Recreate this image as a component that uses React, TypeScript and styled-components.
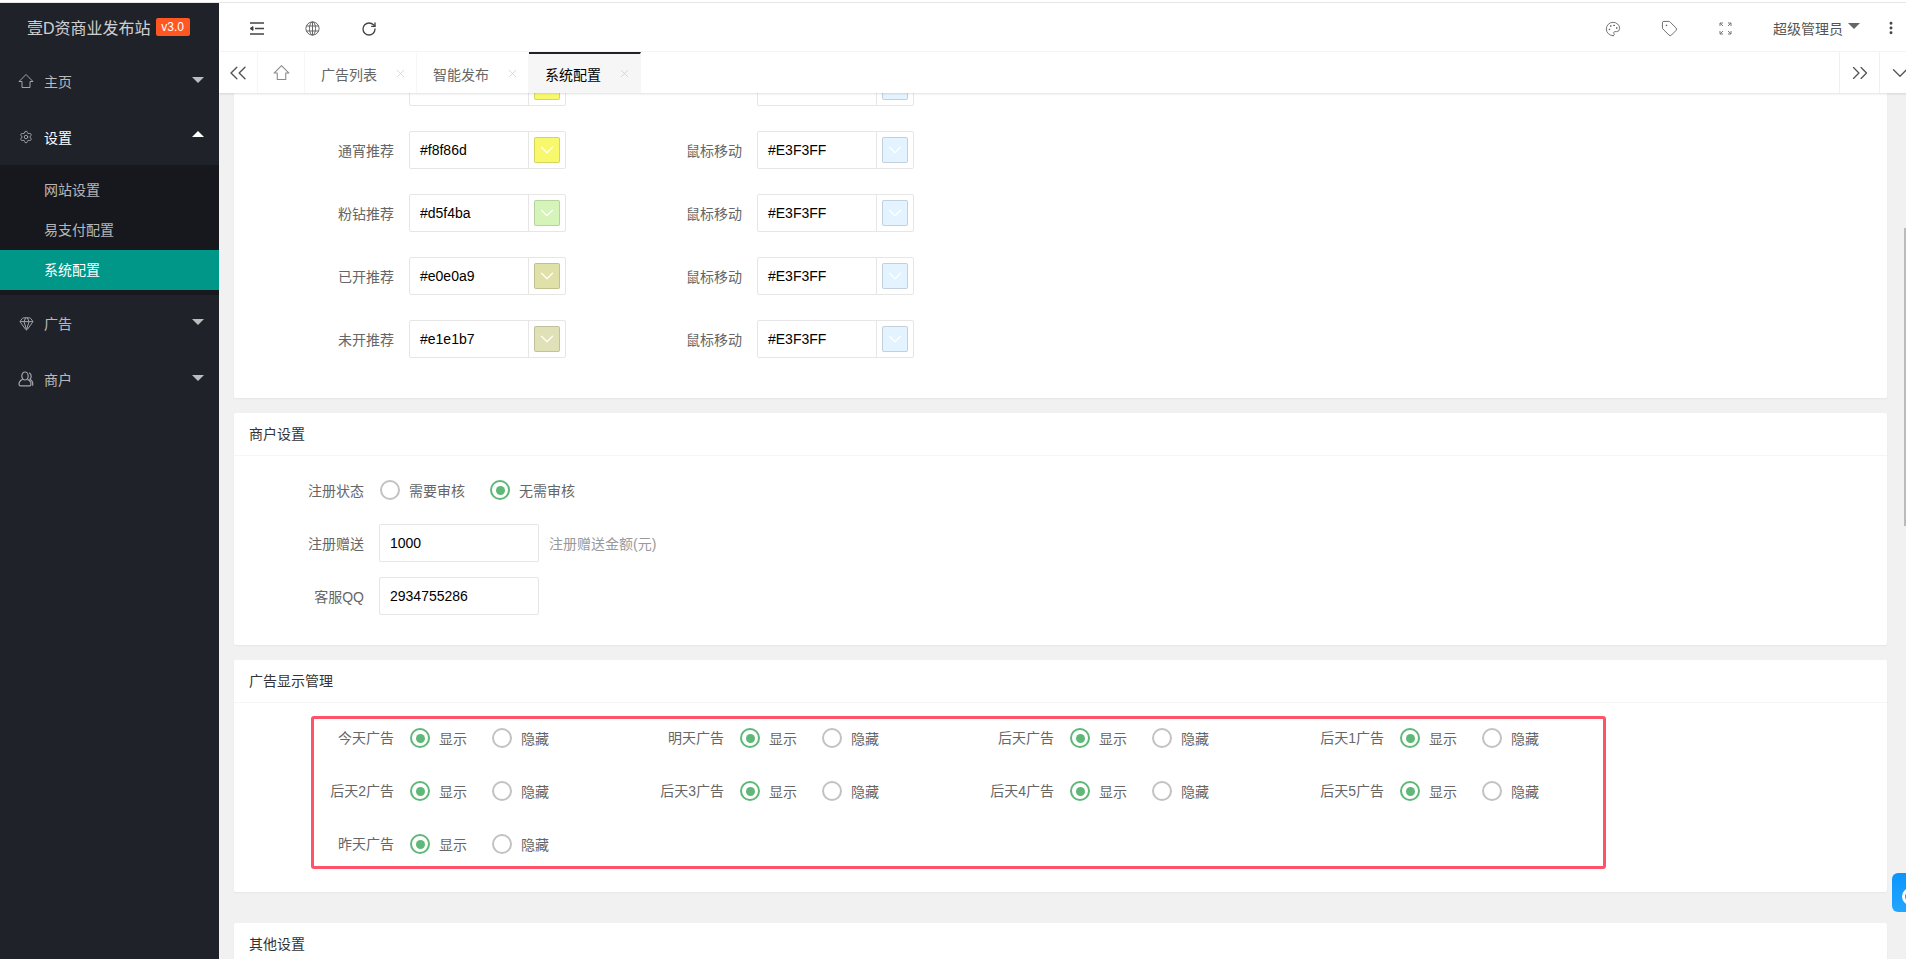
import React from 'react';
import styled, { createGlobalStyle } from 'styled-components';
import {
  ChevronDown,
  ChevronsLeft,
  ChevronsRight,
  EllipsisVertical,
  Gem,
  Palette,
  RotateCw,
  Settings,
  Tag,
  X,
} from 'lucide-react';

const GlobalStyle = createGlobalStyle`
  html, body, #root {
    height: 100%;
    margin: 0;
  }
  body {
    overflow: hidden;
    background: #fff;
    font-family: "Liberation Sans", "Noto Sans CJK SC", sans-serif;
    font-size: 14px;
    color: #666;
  }
  * {
    box-sizing: border-box;
  }
`;

const Page = styled.div`
  display: flex;
  flex-direction: column;
  height: 100%;
`;

const TopStrip = styled.div`
  flex: none;
  height: 3px;
  border-bottom: 1px solid #e6e6e6;
`;

const Shell = styled.div`
  flex: 1;
  display: flex;
  min-height: 0;
`;

/* sidebar */
const Sidebar = styled.aside`
  flex: none;
  width: 219px;
  background: #20222a;
  color: rgba(255, 255, 255, 0.7);
`;

const Logo = styled.div`
  display: flex;
  align-items: center;
  gap: 5px;
  height: 50px;
  padding: 0 0 2px 27px;
  font-size: 16px;
  color: rgba(255, 255, 255, 0.8);
`;

const Badge = styled.span`
  width: 34px;
  height: 18px;
  border-radius: 2px;
  background: #ff5722;
  color: #fff;
  font-size: 12px;
  line-height: 18px;
  text-align: center;
`;

const NavItem = styled.div<{ $open?: boolean }>`
  display: flex;
  align-items: center;
  height: 56px;
  padding: 0 15px 1px 44px;
  position: relative;
  color: ${({ $open }) => ($open ? '#fff' : 'rgba(255, 255, 255, 0.7)')};
`;

const NavIcon = styled.span`
  position: absolute;
  left: 18px;
  top: 50%;
  width: 16px;
  height: 16px;
  margin-top: -8px;
  display: flex;
  align-items: center;
  justify-content: center;
  color: #a3a5a9;
`;

const Caret = styled.i<{ $up?: boolean }>`
  margin-left: auto;
  margin-top: ${({ $up }) => ($up ? '-5px' : '0')};
  width: 0;
  height: 0;
  border: 6px solid transparent;
  ${({ $up }) =>
    $up
      ? 'border-bottom-color: #fff; border-top-width: 0;'
      : 'border-top-color: rgba(255, 255, 255, 0.7); border-bottom-width: 0; transform: translateY(-1px);'}
`;

const SubNav = styled.div`
  padding: 5px 0;
  background: #17181d;
`;

const SubItem = styled.div<{ $active?: boolean }>`
  height: 40px;
  line-height: 40px;
  padding-left: 44px;
  background: ${({ $active }) => ($active ? '#009688' : 'transparent')};
  color: ${({ $active }) => ($active ? '#fff' : 'rgba(255, 255, 255, 0.7)')};
`;

/* header */
const Main = styled.main`
  flex: 1;
  min-width: 0;
  display: flex;
  flex-direction: column;
  overflow: hidden;
  position: relative;
`;

const Header = styled.header`
  flex: none;
  display: flex;
  align-items: center;
  height: 49px;
  padding: 2px 0 0 30px;
  border-bottom: 1px solid #f6f6f6;
`;

const HeaderTool = styled.span`
  width: 56px;
  padding-top: 1px;
  display: flex;
  align-items: center;
  color: #444;
`;

const HeaderRight = styled.div`
  margin-left: auto;
  display: flex;
  align-items: center;
`;

const RightTool = styled.span`
  width: 56px;
  padding-top: 1px;
  display: flex;
  justify-content: center;
  color: #555;
`;

const UserName = styled.span`
  margin-left: 20px;
  color: #555;
`;

const UserCaret = styled.i`
  margin-left: 5px;
  width: 0;
  height: 0;
  border: 6px solid transparent;
  border-top-color: #666;
  border-bottom-width: 0;
  transform: translateY(-2px);
`;

const MoreTool = styled.span`
  display: flex;
  margin: 0 7px 0 23px;
  color: #444;
`;

/* tabs */
const TabBar = styled.nav`
  flex: none;
  display: flex;
  height: 41px;
  margin-right: -13px;
  background: #fff;
  box-shadow: 0 1px 2px rgba(0, 0, 0, 0.12);
  position: relative;
  z-index: 1;
`;

const TabButton = styled.span<{ $end?: boolean }>`
  flex: none;
  display: flex;
  align-items: center;
  justify-content: center;
  width: ${({ $end }) => ($end ? '40px' : '39px')};
  color: #555;
  ${({ $end }) =>
    $end ? 'border-left: 1px solid #f0f0f0;' : 'border-right: 1px solid #f6f6f6;'}
`;

const HomeTab = styled.span`
  flex: none;
  display: flex;
  align-items: center;
  justify-content: center;
  width: 47px;
  color: #8a8a8a;
  border-right: 1px solid #f6f6f6;
`;

const Tab = styled.span<{ $active?: boolean }>`
  flex: none;
  display: flex;
  align-items: center;
  justify-content: space-between;
  width: 112px;
  padding: 0 9px 0 16px;
  color: ${({ $active }) => ($active ? '#000' : '#666')};
  background: ${({ $active }) => ($active ? '#f6f6f6' : 'transparent')};
  border-top: 2px solid ${({ $active }) => ($active ? '#20222a' : 'transparent')};
  border-right: 1px solid ${({ $active }) => ($active ? 'transparent' : '#f6f6f6')};
  svg {
    color: #c8c8c8;
  }
`;

const TabSpacer = styled.span`
  flex: 1;
`;

/* page body */
const Body = styled.div`
  flex: 1;
  min-height: 0;
  overflow: hidden;
  padding: 0 19px 0 15px;
  background: #f1f1f1;
`;

const Card = styled.section`
  display: flow-root;
  background: #fff;
  border-radius: 2px;
  box-shadow: 0 1px 2px rgba(0, 0, 0, 0.05);
  margin-bottom: 15px;
`;

/* the page is scrolled: the first row sits partly behind the tab bar */
const ScrolledCard = styled(Card)`
  margin-top: -25px;
  padding-bottom: 40px;
`;

const SpacedCard = styled(Card)`
  margin-bottom: 31px;
`;

const CardTitle = styled.h2`
  margin: 0;
  height: 43px;
  padding-left: 15px;
  border-bottom: 1px solid #f6f6f6;
  color: #333;
  font-size: 14px;
  font-weight: 400;
  line-height: 42px;
`;

const ColorGrid = styled.div`
  display: grid;
  grid-template-columns: 332px 348px;
  grid-auto-rows: 38px;
  row-gap: 25px;
`;

const ColorField = styled.div<{ $labelWidth: number }>`
  display: grid;
  grid-template-columns: ${({ $labelWidth }) => $labelWidth}px 157px;
  column-gap: 15px;
  align-items: center;
`;

const FieldLabel = styled.label<{ $lift?: number }>`
  color: #666;
  text-align: right;
  white-space: nowrap;
  padding-bottom: ${({ $lift }) => $lift ?? 0}px;
`;

const Picker = styled.div`
  display: flex;
  height: 38px;
  border: 1px solid #e6e6e6;
  border-radius: 2px;
  background: #fff;
`;

const PickerValue = styled.div`
  flex: 1;
  padding-left: 10px;
  line-height: 36px;
  color: #000;
`;

const PickerBox = styled.div`
  flex: none;
  width: 37px;
  display: flex;
  align-items: center;
  justify-content: center;
  border-left: 1px solid #e6e6e6;
`;

const Swatch = styled.div<{ $color: string }>`
  width: 26px;
  height: 26px;
  display: flex;
  align-items: center;
  justify-content: center;
  border: 1px solid rgba(0, 0, 0, 0.14);
  border-radius: 2px;
  background: ${({ $color }) => $color};
  color: #fff;
`;

const MerchantForm = styled.div`
  display: flex;
  flex-direction: column;
  gap: 15px;
  padding: 15px 0 30px;
`;

const FormRow = styled.div`
  display: grid;
  grid-template-columns: 130px 160px auto;
  column-gap: 15px;
  align-items: center;
  height: 38px;
`;

const RadioRow = styled(FormRow)`
  grid-template-columns: 130px auto;
`;

const TextInput = styled.div`
  height: 38px;
  padding-left: 10px;
  border: 1px solid #e6e6e6;
  border-radius: 2px;
  background: #fff;
  color: #000;
  line-height: 36px;
`;

const Help = styled.span`
  margin-left: -5px;
  padding-bottom: 1px;
  color: #999;
`;

const RadioGroup = styled.div`
  display: flex;
  align-items: center;
  padding-left: 1px;
`;

const RadioOption = styled.span`
  display: flex;
  align-items: center;
  gap: 9px;
  margin-right: 25px;
  color: #666;
`;

const RadioMark = styled.i<{ $checked?: boolean }>`
  flex: none;
  display: flex;
  align-items: center;
  justify-content: center;
  width: 20px;
  height: 20px;
  border: 2px solid ${({ $checked }) => ($checked ? '#5fb878' : '#c2c2c2')};
  border-radius: 50%;
  &::after {
    content: '';
    width: 9px;
    height: 9px;
    border-radius: 50%;
    background: ${({ $checked }) => ($checked ? '#5fb878' : 'transparent')};
  }
`;

const Highlight = styled.div`
  display: grid;
  grid-template-columns: repeat(3, 330px) 1fr;
  grid-auto-rows: 38px;
  row-gap: 15px;
  width: 1295px;
  margin: 13px 0 23px 77px;
  padding-bottom: 3px;
  border: 3px solid #ff5369;
  border-radius: 3px;
`;

const DisplayItem = styled.div`
  display: grid;
  grid-template-columns: 80px auto;
  column-gap: 15px;
  align-items: center;
`;

const ScrollThumb = styled.div`
  position: absolute;
  right: 0;
  top: 225px;
  width: 2px;
  height: 298px;
  background: #bbb;
`;

const ChatTab = styled.div`
  position: fixed;
  right: 0;
  top: 873px;
  width: 14px;
  height: 39px;
  border-radius: 6px 0 0 6px;
  background: linear-gradient(180deg, #0a95ff, #23a6ff);
  overflow: hidden;
  &::after {
    content: '';
    position: absolute;
    left: 10px;
    top: 15px;
    width: 11px;
    height: 11px;
    border: 3px solid #fff;
    border-radius: 50%;
  }
`;

const ShrinkIcon = () => (
  <svg width="16" height="13" viewBox="0 0 16 13" fill="none" stroke="currentColor" strokeWidth="1.5">
    <path d="M1 1h14M6 6.5h9M1 12h14" />
    <path d="M1 6.5 4 4.6v3.8z" fill="currentColor" strokeWidth="1" />
  </svg>
);

const GlobeIcon = () => (
  <svg width="15" height="15" viewBox="0 0 15 15" fill="none" stroke="#666" strokeWidth="1">
    <circle cx="7.5" cy="7.5" r="6.6" />
    <ellipse cx="7.5" cy="7.5" rx="3" ry="6.6" />
    <path d="M7.5 1v13M1.4 5h12.2M1.4 10h12.2" />
  </svg>
);

const HomeIcon = ({ size = 16 }: { size?: number }) => (
  <svg width={size} height={size} viewBox="0 0 16 16" fill="none" stroke="currentColor" strokeWidth="1">
    <path d="M1 8.5 8 1.5l7 7h-3v6H4v-6z" strokeLinejoin="round" />
  </svg>
);

const UsernameIcon = () => (
  <svg width="16" height="16" viewBox="0 0 16 16" fill="none" stroke="currentColor" strokeWidth="1.2">
    <ellipse cx="7" cy="5" rx="3.2" ry="4" />
    <path d="M4.6 8.2C2.6 9.2 1 10.8 1 13.2c0 1 .6 1.6 1.6 1.6h8.8c1 0 1.6-.6 1.6-1.6 0-2.4-1.6-4-3.6-5" />
    <path d="M11.2 1.8c1.3.8 2 2 2 3.4 0 1.2-.5 2.2-1.2 3 1.6.8 2.8 2.600 2.800 5 0 .6-.2 1.100-.5 1.500" />
  </svg>
);

const FullscreenIcon = () => (
  <svg width="13" height="13" viewBox="0 0 13 13" fill="none" stroke="#777" strokeWidth="1">
    <path d="M1 4V1h3M1 1l3 3M9 1h3v3M12 1 9 4M1 9v3h3M1 12l3-3M9 12h3V9M12 12 9 9" />
  </svg>
);

const colorRows = [
  { label: '钻石推荐', value: '#f8f86d' },
  { label: '通宵推荐', value: '#f8f86d' },
  { label: '粉钻推荐', value: '#d5f4ba' },
  { label: '已开推荐', value: '#e0e0a9' },
  { label: '未开推荐', value: '#e1e1b7' },
];

const displayItems = [
  '今天广告',
  '明天广告',
  '后天广告',
  '后天1广告',
  '后天2广告',
  '后天3广告',
  '后天4广告',
  '后天5广告',
  '昨天广告',
];

function ColorPicker({ value }: { value: string }) {
  return (
    <Picker>
      <PickerValue>{value}</PickerValue>
      <PickerBox>
        <Swatch $color={value}>
          <ChevronDown size={22} strokeWidth={1.3} />
        </Swatch>
      </PickerBox>
    </Picker>
  );
}

function Radio({ label, checked }: { label: string; checked?: boolean }) {
  return (
    <RadioOption>
      <RadioMark $checked={checked} />
      {label}
    </RadioOption>
  );
}

export default function App() {
  return (
    <Page>
      <GlobalStyle />
      <TopStrip />
      <Shell>
        <Sidebar>
          <Logo>
            壹D资商业发布站
            <Badge>v3.0</Badge>
          </Logo>
          <NavItem>
            <NavIcon>
              <HomeIcon />
            </NavIcon>
            主页
            <Caret />
          </NavItem>
          <NavItem $open>
            <NavIcon>
              <Settings size={14} strokeWidth={1.6} />
            </NavIcon>
            设置
            <Caret $up />
          </NavItem>
          <SubNav>
            <SubItem>网站设置</SubItem>
            <SubItem>易支付配置</SubItem>
            <SubItem $active>系统配置</SubItem>
          </SubNav>
          <NavItem>
            <NavIcon>
              <Gem size={15} strokeWidth={1.6} />
            </NavIcon>
            广告
            <Caret />
          </NavItem>
          <NavItem>
            <NavIcon>
              <UsernameIcon />
            </NavIcon>
            商户
            <Caret />
          </NavItem>
        </Sidebar>

        <Main>
          <Header>
            <HeaderTool>
              <ShrinkIcon />
            </HeaderTool>
            <HeaderTool>
              <GlobeIcon />
            </HeaderTool>
            <HeaderTool>
              <RotateCw size={16} strokeWidth={2} />
            </HeaderTool>
            <HeaderRight>
              <RightTool>
                <Palette size={16} strokeWidth={1.2} />
              </RightTool>
              <RightTool>
                <Tag size={17} strokeWidth={1.2} />
              </RightTool>
              <RightTool>
                <FullscreenIcon />
              </RightTool>
              <UserName>超级管理员</UserName>
              <UserCaret />
              <MoreTool>
                <EllipsisVertical size={16} strokeWidth={2.4} />
              </MoreTool>
            </HeaderRight>
          </Header>

          <TabBar>
            <TabButton>
              <ChevronsLeft size={28} strokeWidth={1.2} />
            </TabButton>
            <HomeTab>
              <HomeIcon size={17} />
            </HomeTab>
            <Tab>
              广告列表
              <X size={13} strokeWidth={1.2} />
            </Tab>
            <Tab>
              智能发布
              <X size={13} strokeWidth={1.2} />
            </Tab>
            <Tab $active>
              系统配置
              <X size={13} strokeWidth={1.2} />
            </Tab>
            <TabSpacer />
            <TabButton $end>
              <ChevronsRight size={26} strokeWidth={1.2} />
            </TabButton>
            <TabButton $end>
              <ChevronDown size={26} strokeWidth={1.2} />
            </TabButton>
          </TabBar>

          <Body>
            <ScrolledCard>
              <ColorGrid>
                {colorRows.map((row, index) => (
                  <React.Fragment key={row.label}>
                    <ColorField $labelWidth={160}>
                      <FieldLabel $lift={index === 0 ? 6 : 0}>{row.label}</FieldLabel>
                      <ColorPicker value={row.value} />
                    </ColorField>
                    <ColorField $labelWidth={176}>
                      <FieldLabel $lift={index === 0 ? 8 : 0}>鼠标移动</FieldLabel>
                      <ColorPicker value="#E3F3FF" />
                    </ColorField>
                  </React.Fragment>
                ))}
              </ColorGrid>
            </ScrolledCard>

            <Card>
              <CardTitle>商户设置</CardTitle>
              <MerchantForm>
                <RadioRow>
                  <FieldLabel $lift={1}>注册状态</FieldLabel>
                  <RadioGroup>
                    <Radio label="需要审核" />
                    <Radio label="无需审核" checked />
                  </RadioGroup>
                </RadioRow>
                <FormRow>
                  <FieldLabel $lift={1}>注册赠送</FieldLabel>
                  <TextInput>1000</TextInput>
                  <Help>注册赠送金额(元)</Help>
                </FormRow>
                <FormRow>
                  <FieldLabel $lift={1}>客服QQ</FieldLabel>
                  <TextInput>2934755286</TextInput>
                </FormRow>
              </MerchantForm>
            </Card>

            <SpacedCard>
              <CardTitle>广告显示管理</CardTitle>
              <Highlight>
                {displayItems.map((name) => (
                  <DisplayItem key={name}>
                    <FieldLabel $lift={2}>{name}</FieldLabel>
                    <RadioGroup>
                      <Radio label="显示" checked />
                      <Radio label="隐藏" />
                    </RadioGroup>
                  </DisplayItem>
                ))}
              </Highlight>
            </SpacedCard>

            <Card>
              <CardTitle>其他设置</CardTitle>
            </Card>
          </Body>

          <ScrollThumb />
        </Main>
      </Shell>
      <ChatTab />
    </Page>
  );
}
